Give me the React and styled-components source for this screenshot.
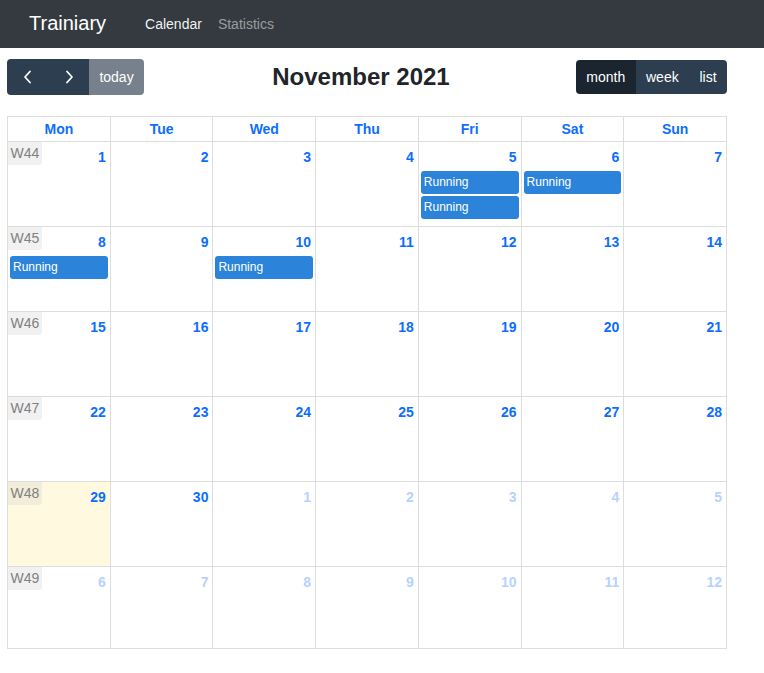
import * as React from 'react';
import styled, { createGlobalStyle } from 'styled-components';

const GlobalStyle = createGlobalStyle`
  body {
    margin: 0;
    font-family: "Liberation Sans", Arial, sans-serif;
    font-size: 14px;
    color: #212529;
    background: #fff;
  }
`;

const DAY_NAMES = ['Mon', 'Tue', 'Wed', 'Thu', 'Fri', 'Sat', 'Sun'];

const EVENTS = {
  5: ['Running', 'Running'],
  6: ['Running'],
  8: ['Running'],
  10: ['Running'],
};

const buildWeeks = () => {
  const weeks = [];
  let day = 1;
  let month = 'nov';
  for (let w = 0; w < 6; w++) {
    const days = [];
    for (let d = 0; d < 7; d++) {
      days.push({ date: day, other: month !== 'nov' });
      day += 1;
      if (month === 'nov' && day > 30) {
        day = 1;
        month = 'dec';
      }
    }
    weeks.push({ number: 44 + w, days });
  }
  return weeks;
};

const ChevronLeft = () => (
  <svg width="12" height="14" viewBox="0 0 12 14" fill="none">
    <path d="M8 1.5L3 7l5 5.5" stroke="#fff" strokeWidth="1.8" strokeLinecap="round" strokeLinejoin="round" />
  </svg>
);

const ChevronRight = () => (
  <svg width="12" height="14" viewBox="0 0 12 14" fill="none">
    <path d="M4 1.5L9 7l-5 5.5" stroke="#fff" strokeWidth="1.8" strokeLinecap="round" strokeLinejoin="round" />
  </svg>
);

const App = () => {
  const weeks = buildWeeks();

  return (
    <>
      <GlobalStyle />
      <StyledNavbar>
        <StyledBrand>Trainiary</StyledBrand>
        <StyledNavLink active>Calendar</StyledNavLink>
        <StyledNavLink>Statistics</StyledNavLink>
      </StyledNavbar>

      <StyledCalendar>
        <StyledToolbar>
          <StyledButtonGroup>
            <StyledButton icon>
              <ChevronLeft />
            </StyledButton>
            <StyledButton icon>
              <ChevronRight />
            </StyledButton>
            <StyledButton disabled>today</StyledButton>
          </StyledButtonGroup>
          <StyledTitle>November 2021</StyledTitle>
          <StyledButtonGroup>
            <StyledButton active>month</StyledButton>
            <StyledButton>week</StyledButton>
            <StyledButton>list</StyledButton>
          </StyledButtonGroup>
        </StyledToolbar>

        <StyledGrid>
          {DAY_NAMES.map((name) => (
            <StyledHeaderCell key={name}>{name}</StyledHeaderCell>
          ))}
          {weeks.map((week, wi) =>
            week.days.map((day, di) => (
              <StyledDayCell
                key={`${wi}-${di}`}
                today={!day.other && day.date === 29}
              >
                {di === 0 && <StyledWeekNumber>W{week.number}</StyledWeekNumber>}
                <StyledDayNumber other={day.other}>{day.date}</StyledDayNumber>
                {!day.other &&
                  (EVENTS[day.date] || []).map((title, i) => (
                    <StyledEvent key={i}>{title}</StyledEvent>
                  ))}
              </StyledDayCell>
            ))
          )}
        </StyledGrid>
      </StyledCalendar>
    </>
  );
};

const StyledNavbar = styled.nav`
  display: flex;
  align-items: center;
  height: 48px;
  padding: 0 29px;
  background: #343a40;
  box-sizing: border-box;
`;

const StyledBrand = styled.div`
  color: #fff;
  font-size: 20px;
  margin-right: 39px;
  margin-top: -2px;
`;

const StyledNavLink = styled.a`
  color: ${(props) => (props.active ? 'rgba(255,255,255,0.95)' : 'rgba(255,255,255,0.5)')};
  font-size: 14px;
  margin-right: 16px;
  cursor: pointer;
`;

const StyledCalendar = styled.div`
  width: 720px;
  margin: 0 0 0 7px;
  padding-top: 11px;
`;

const StyledToolbar = styled.div`
  display: flex;
  justify-content: space-between;
  align-items: center;
  margin-bottom: 21px;
`;

const StyledButtonGroup = styled.div`
  display: flex;
  border-radius: 4px;
  overflow: hidden;
`;

const StyledButton = styled.button`
  display: flex;
  align-items: center;
  justify-content: center;
  height: ${(props) => (props.icon || props.disabled ? '36px' : '34px')};
  min-width: ${(props) => (props.icon ? '41px' : 'auto')};
  padding: 0 10.4px;
  border: none;
  font-family: "Liberation Sans", Arial, sans-serif;
  font-size: 14px;
  color: #fff;
  background: ${(props) =>
    props.active ? '#1a252f' : props.disabled ? '#76818d' : '#2c3e50'};
  cursor: pointer;
`;

const StyledTitle = styled.h2`
  margin: 0 0 0 2px;
  font-size: 24px;
  font-weight: 700;
  color: #212529;
`;

const StyledGrid = styled.div`
  display: grid;
  grid-template-columns: repeat(7, 1fr);
  grid-template-rows: 25px repeat(5, 85px) 82px;
  border-top: 1px solid #ddd;
  border-left: 1px solid #ddd;
`;

const StyledHeaderCell = styled.div`
  display: flex;
  align-items: center;
  justify-content: center;
  border-right: 1px solid #ddd;
  border-bottom: 1px solid #ddd;
  color: #0d6efd;
  font-weight: 700;
  font-size: 14px;
`;

const StyledDayCell = styled.div`
  position: relative;
  display: flex;
  flex-direction: column;
  border-right: 1px solid #ddd;
  border-bottom: 1px solid #ddd;
  background: ${(props) => (props.today ? '#fffadf' : '#fff')};
  min-width: 0;
`;

const StyledWeekNumber = styled.div`
  position: absolute;
  top: 0;
  left: 0;
  width: 34px;
  height: 23px;
  line-height: 23px;
  text-align: center;
  background: rgba(208, 208, 208, 0.3);
  color: #808080;
  font-size: 14px;
  border-bottom-right-radius: 3px;
`;

const StyledDayNumber = styled.div`
  align-self: flex-end;
  padding: 5px 4px 3px;
  line-height: 21px;
  height: 21px;
  font-weight: 700;
  font-size: 14px;
  color: ${(props) => (props.other ? '#b6d3fe' : '#0d6efd')};
`;

const StyledEvent = styled.div`
  margin: 0 2px 2px 2px;
  height: 23px;
  line-height: 23px;
  padding: 0 3px;
  background: #2c84da;
  border-radius: 3px;
  color: #fff;
  font-size: 12px;
  white-space: nowrap;
  overflow: hidden;
`;

export default App;
